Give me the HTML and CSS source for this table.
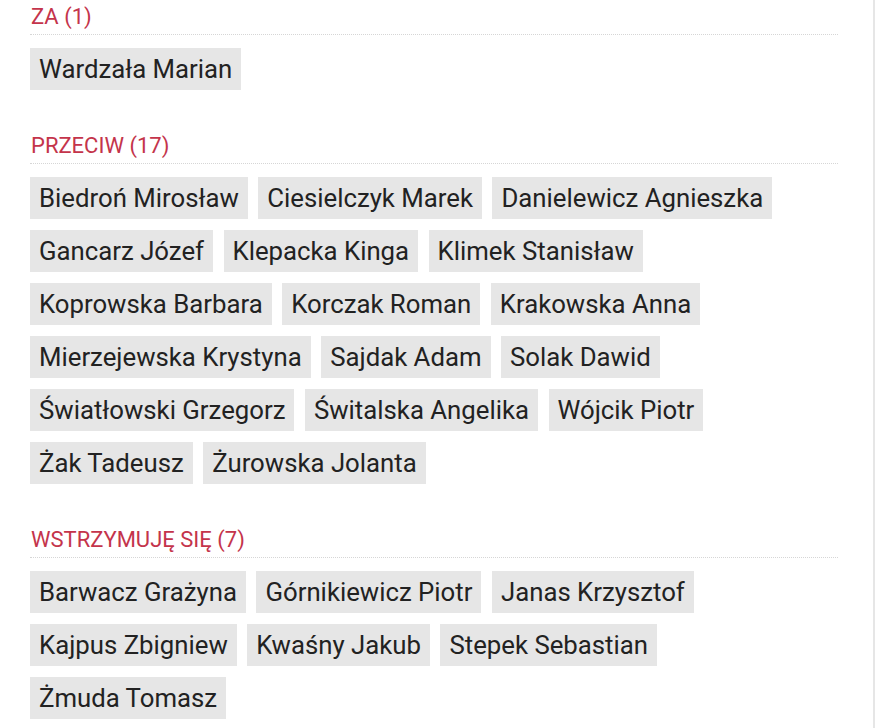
FILE: index.html
```html
<!DOCTYPE html>
<html lang="pl">
<head>
<meta charset="utf-8">
<link rel="stylesheet" href="styles.css">
</head>
<body>
<div class="page">
  <section class="group">
    <h3 class="group-title">ZA (1)</h3>
    <ul class="chips">
      <li class="chip">Wardzała Marian</li>
    </ul>
  </section>
  <section class="group">
    <h3 class="group-title">PRZECIW (17)</h3>
    <ul class="chips">
      <li class="chip">Biedroń Mirosław</li>
      <li class="chip">Ciesielczyk Marek</li>
      <li class="chip">Danielewicz Agnieszka</li>
      <li class="chip">Gancarz Józef</li>
      <li class="chip">Klepacka Kinga</li>
      <li class="chip">Klimek Stanisław</li>
      <li class="chip">Koprowska Barbara</li>
      <li class="chip">Korczak Roman</li>
      <li class="chip">Krakowska Anna</li>
      <li class="chip">Mierzejewska Krystyna</li>
      <li class="chip">Sajdak Adam</li>
      <li class="chip">Solak Dawid</li>
      <li class="chip">Światłowski Grzegorz</li>
      <li class="chip">Świtalska Angelika</li>
      <li class="chip">Wójcik Piotr</li>
      <li class="chip">Żak Tadeusz</li>
      <li class="chip">Żurowska Jolanta</li>
    </ul>
  </section>
  <section class="group">
    <h3 class="group-title">WSTRZYMUJĘ SIĘ (7)</h3>
    <ul class="chips">
      <li class="chip">Barwacz Grażyna</li>
      <li class="chip">Górnikiewicz Piotr</li>
      <li class="chip">Janas Krzysztof</li>
      <li class="chip">Kajpus Zbigniew</li>
      <li class="chip">Kwaśny Jakub</li>
      <li class="chip">Stepek Sebastian</li>
      <li class="chip">Żmuda Tomasz</li>
    </ul>
  </section>
</div>
</body>
</html>
```

FILE: styles.css
```css
html, body {
  margin: 0;
  padding: 0;
  background: #fff;
}
body {
  font-family: Roboto, "Noto Sans", sans-serif;
  color: #222;
}
.page {
  width: 875px;
  min-height: 728px;
  box-sizing: border-box;
  border-right: 2px solid #e6e6e6;
  padding: 5px 35px 0 30px;
}
.group {
  margin-bottom: 44px;
}
.group-title {
  margin: 0;
  font-weight: 400;
  font-size: 22px;
  line-height: 24px;
  color: #c4344b;
  padding: 0 0 5px 1px;
  border-bottom: 1px dotted #d6d6d6;
}
.chips {
  list-style: none;
  margin: 13px 0 0 0;
  padding: 0;
  display: flex;
  flex-wrap: wrap;
  gap: 11px 10.5px;
}
.chip {
  background: #e6e6e6;
  font-size: 25.75px;
  line-height: 42px;
  padding: 0 9px;
  color: #222;
}
```
